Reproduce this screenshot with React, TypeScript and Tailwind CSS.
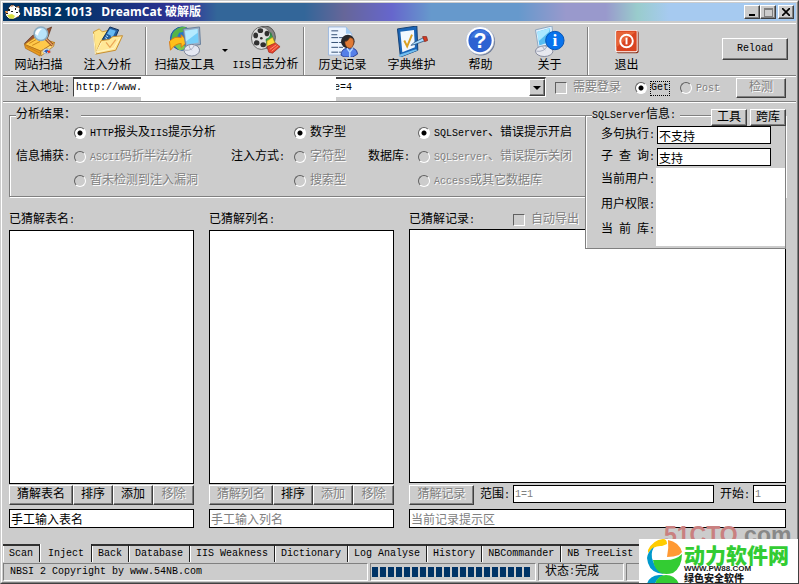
import { useState } from "react";
import type { ReactNode } from "react";

const LATIN = "font-['Liberation_Mono','Noto_Sans_CJK_SC',monospace] text-[10px]";
const FIELD_CJK = "font-['Noto_Sans_CJK_SC',sans-serif] text-xs";

/** Chinese runs are set at 12px, Latin runs in a half-width face. */
function T({ children }: { children: string }) {
  const runs = children.match(/[\x20-\x7e]+|[^\x20-\x7e]+/g) ?? [];
  return (
    <>
      {runs.map((run, i) =>
        /^[\x20-\x7e]/.test(run) ? (
          <span key={i} className={`${LATIN} whitespace-pre`}>{run}</span>
        ) : (
          <span key={i}>{run}</span>
        ),
      )}
    </>
  );
}

const DISABLED = "text-[#808080] [text-shadow:1px_1px_0_#fff]";
const RAISED =
  "border border-t-white border-l-white border-r-[#404040] border-b-[#404040] bg-[#ccc] shadow-[inset_-1px_-1px_0_#808080]";

function PushButton({ children, disabled, className = "" }: { children: string; disabled?: boolean; className?: string }) {
  return (
    <button type="button" disabled={disabled} className={`flex items-center justify-center whitespace-nowrap ${RAISED} ${disabled ? DISABLED : ""} ${className}`}>
      <T>{children}</T>
    </button>
  );
}

function Radio({ name, label, checked, disabled, dotted }: { name: string; label: string; checked?: boolean; disabled?: boolean; dotted?: boolean }) {
  return (
    <label className={`flex h-6 items-center gap-1 whitespace-nowrap ${disabled ? DISABLED : ""}`}>
      <input
        type="radio"
        name={name}
        defaultChecked={checked}
        disabled={disabled}
        className="size-3 shrink-0 appearance-none rounded-full border border-t-[#606060] border-r-white border-b-white border-l-[#606060] checked:bg-white checked:bg-[radial-gradient(circle,#000_2px,transparent_3px)]"
      />
      <span className={dotted ? "flex h-[13px] items-center outline-1 outline-dotted outline-black" : ""}>
        <T>{label}</T>
      </span>
    </label>
  );
}

function Check({ label }: { label: string }) {
  return (
    <label className={`flex items-center gap-[6px] whitespace-nowrap ${DISABLED}`}>
      <input type="checkbox" disabled className="size-3 shrink-0 appearance-none border border-t-[#606060] border-r-white border-b-white border-l-[#606060]" />
      <T>{label}</T>
    </label>
  );
}

function ScanIcon() {
  return (
    <svg className="size-8" viewBox="0 0 32 32">
      <path d="M1 18 9 10 29 1 25 12 12 18Z" fill="#9a5434" stroke="#5a3018" strokeWidth=".7" />
      <path d="M1 19 13 11 32 17 18 26Z" fill="#ffc94a" stroke="#b67518" strokeWidth=".8" />
      <path d="M1 19 18 26 17 31 2 23Z" fill="#e99b20" stroke="#a86512" strokeWidth=".7" />
      <path d="M18 26 32 17 31 21 18 31Z" fill="#ffdc79" stroke="#a86512" strokeWidth=".7" />
      <path d="m3 21 14 7M6 18l7-4M9 20l8-4" stroke="#c98218" fill="none" />
      <path d="m22 12 8 8" stroke="#8c4a20" strokeWidth="3" />
      <path d="m22 12 8 8" stroke="#f0a868" strokeWidth="1.4" />
      <circle cx="18" cy="8" r="7" fill="#b9e3fa" stroke="#8babc0" strokeWidth="1.6" />
      <path d="M12 8q1-6 7-5-4 3-4 7z" fill="#fff" />
      <ellipse cx="24" cy="26" rx="4" ry="2.6" fill="#f5f5f5" stroke="#8898b0" strokeWidth=".6" />
      <path d="M21 26q3-3 5-1l-2 3z" fill="#245ebc" />
      <path d="m24 26 3-1 1 2-2 1z" fill="#e23b22" />
    </svg>
  );
}

function FolderIcon() {
  return (
    <svg className="size-8" viewBox="0 0 32 32">
      <path d="M1 6 7 3l3 3 13-3 2 16-19 9-3-1z" fill="#ffe58a" stroke="#d09c38" />
      <path d="m10 14 8-13 9 3-6 14z" fill="#245e9f" stroke="#102e58" />
      <path d="m15 8 3-5 6 2-3 6z" fill="#65b9f3" />
      <path d="m13 12 2 1m-1-3 2 1m2 2 2 1m-1-3 2 1" stroke="#c8ecff" />
      <path d="m3 29 6-14 8-1 4-3 10-1-7 15z" fill="#ffe797" stroke="#c58b2c" />
      <path d="m3 29-2-21M9 17l-5 10 18-4 6-10" fill="none" stroke="#fff6c8" />
      <path d="m14 17 4 5 6-8" fill="none" stroke="#eba657" strokeWidth="1.3" />
    </svg>
  );
}

function ToolsIcon() {
  return (
    <svg className="size-8" viewBox="0 0 32 32">
      <circle cx="13" cy="13" r="12" fill="#2477ca" stroke="#1c5799" />
      <path d="M3 8Q8 0 17 1L15 6l-5 1-3 6-5 1z" fill="#56b448" />
      <path d="m8 17 7 2 2 5-7 1-5-5z" fill="#82cb4c" />
      <path d="M0 16q5-6 12-4l0-3 7 7-7 6v-4q-6 0-11 7z" fill="#ffbf1a" stroke="#da7914" />
      <path d="m14 3 17-2 1 18-15 3z" fill="#9ab0c8" stroke="#667e9b" />
      <path d="m16 5 13-2 1 14-12 2z" fill="#76cef9" />
      <path d="m16 5 13-2v4L17 16z" fill="#b5eaff" />
      <ellipse cx="23" cy="25" rx="8" ry="6" fill="#e5e8f2" stroke="#7d8499" />
      <path d="M16 25q8 1 10-6M20 19q0 4 3 6" fill="none" stroke="#a6abbf" />
    </svg>
  );
}

function ReelIcon() {
  return (
    <svg className="size-8" viewBox="0 0 32 32">
      <ellipse cx="15" cy="12" rx="11" ry="12" fill="#858585" stroke="#505050" />
      <ellipse cx="11" cy="13" rx="10.5" ry="12" fill="#ddd" stroke="#666" />
      <g fill="#303030">
        <ellipse cx="10" cy="5" rx="3" ry="2.5" />
        <ellipse cx="17" cy="8" rx="2.5" ry="3" />
        <ellipse cx="5" cy="10" rx="2.5" ry="3" />
        <ellipse cx="6" cy="18" rx="3" ry="2.7" />
        <ellipse cx="13" cy="20" rx="3" ry="2.7" />
        <circle cx="11" cy="13" r="1.4" />
      </g>
      <path d="M16 14q5-1 5-7l4 10-8 4z" fill="#38a84a" stroke="#26783a" strokeWidth=".7" />
      <path d="m17 16 6-4 3 7-9 3z" fill="#ffdf3d" stroke="#b58b1c" strokeWidth=".7" />
      <path d="m17 22 9-4 5 4-8 7-4-1z" fill="#e6402c" stroke="#932819" strokeWidth=".7" />
      <path d="m20 25 7-5m-5 7 7-6" stroke="#ff9b73" />
    </svg>
  );
}

function HistoryIcon() {
  return (
    <svg className="size-8" viewBox="0 0 32 32">
      <path d="M1 1h18l6 7v22H1z" fill="#edf5ff" stroke="#9fb9df" />
      <path d="M19 1v7h6z" fill="#9fcaf2" />
      <path d="M4 5h8M4 9h6M4 12h13M4 17h13M4 22h12M4 27h10" stroke="#304b72" strokeDasharray="7 1" />
      <path d="M14 30q0-6 6-7l7 0q4 2 4 6l-5 3h-9z" fill="#557fe8" stroke="#2b3f91" />
      <circle cx="21" cy="16" r="7" fill="#27272b" />
      <path d="M18 16q3 0 5-4 4 0 4 4 0 6-4 7-5-1-5-7" fill="#e07a35" stroke="#8d451d" strokeWidth=".6" />
      <path d="m20 23 3 4 3-4m-3 4v5" stroke="#b9dcff" fill="none" strokeWidth="1.5" />
    </svg>
  );
}

function DictionaryIcon() {
  return (
    <svg className="size-8" viewBox="0 0 32 32">
      <path d="M1 3 21 0l1 25-18 7z" fill="#1b66b7" stroke="#123e73" />
      <path d="m4 6 14-2 1 18L6 27z" fill="#f2f8ff" />
      <path d="m2 30 18-6 2 1-18 7z" fill="#73bff0" />
      <path d="m8 15 3 6 5-12" stroke="#d9a023" strokeWidth="2" fill="none" />
      <path d="m15 20 3-3 10-5 2 3-11 4z" fill="#a8dcff" stroke="#244d77" strokeWidth=".8" />
      <path d="m27 11 4 0 1 4-3 1z" fill="#d83a20" stroke="#963022" />
    </svg>
  );
}

function HelpIcon() {
  return (
    <svg className="size-8" viewBox="0 0 32 32">
      <circle cx="16" cy="16" r="14.500" fill="#707d98" />
      <circle cx="15" cy="15" r="14.500" fill="#fff" stroke="#a8b4cc" strokeWidth=".6" />
      <circle cx="15" cy="15" r="12" fill="#2d62d2" />
      <path d="M5 13q3-9 11-9 6 0 9 6-10-2-20 3" fill="#3f76dd" />
      <text x="15" y="23" fontFamily="Liberation Sans" fontSize="22" fontWeight="bold" fill="#fff" textAnchor="middle">?</text>
    </svg>
  );
}

function AboutIcon() {
  return (
    <svg className="size-8" viewBox="0 0 32 32">
      <path d="m1 4 17-4 2 17L4 23z" fill="#e1f2ff" stroke="#8ba5bf" />
      <path d="m3 6 13-4 1 14L5 20z" fill="#57bdf1" />
      <path d="m3 6 13-4-1 4L4 16z" fill="#a9e7ff" />
      <ellipse cx="10" cy="26" rx="9" ry="5.500" fill="#e7e8ef" stroke="#858a9d" />
      <path d="M2 26q8 1 11-5M8 21l3 4" stroke="#a4aabd" fill="none" />
      <circle cx="21" cy="15" r="9.500" fill="#0873ed" stroke="#0654b3" />
      <text x="21" y="21" fontFamily="Liberation Serif" fontSize="18" fontWeight="bold" fill="#fff" textAnchor="middle">i</text>
    </svg>
  );
}

function ExitIcon() {
  return (
    <svg className="size-8" viewBox="0 0 32 32">
      <rect x="5" y="5" width="23" height="23" rx="2" fill="#873018" />
      <rect x="4" y="4" width="23" height="23" rx="2" fill="#fff" />
      <rect x="5" y="5" width="21" height="21" rx="1" fill="#d94420" />
      <path d="M5 6h20L5 22z" fill="#e76438" />
      <circle cx="15.500" cy="15.500" r="6.500" fill="none" stroke="#fff" strokeWidth="2" />
      <path d="M15.500 12v7" stroke="#fff" strokeWidth="2" />
    </svg>
  );
}

function CatIcon() {
  return (
    <svg className="size-4" viewBox="0 0 16 16">
      <path d="M4 3 6 1l3 0 2 2 3-1 1 3-1 2 2 3-3 3-4 2-5 0-3-3-1-3 2-1z" fill="#fff" stroke="#101820" strokeWidth=".8" />
      <path d="m5 3 2-2 2 1zm6 0 3-1 0 2z" fill="#b76c3c" />
      <path d="m2 11 5-1 3 2-2 3-4-1z" fill="#d8df43" />
      <path d="M3 5h2v2H3zm3 2h2v1H6zm4-3h1v2h-1zM11 8h2v1h-2zM1 9h2v1H1z" fill="#1c1c1c" />
      <path d="m0 7 2 0 1 2-2 0zm12 5 2 0-1 1z" fill="#ff9c40" />
    </svg>
  );
}

function Tool({ icon, label }: { icon: ReactNode; label: string }) {
  return (
    <button type="button" className="flex w-[69px] shrink-0 flex-col items-center whitespace-nowrap">
      {icon}
      <span className="leading-[18px]"><T>{label}</T></span>
    </button>
  );
}

function Separator() {
  return <div className="mx-[3px] h-12 w-[2px] shrink-0 self-center border-r border-l border-r-white border-l-[#808080]" />;
}

function TitleBar() {
  return (
    <header className="flex h-[18px] items-center bg-[linear-gradient(90deg,#003366_0%,#003366_8%,#333399_23%,#336699_27%,#336699_38%,#666699_43%,#6666cc_49%,#6699cc_54%,#6699cc_65%,#9999cc_71%,#9999cc_76%,#99cccc_80%,#a6caf0_84%)] pr-[2px] pl-[2px]">
      <CatIcon />
      <h1 className="ml-[2px] font-['Open_Sans','Noto_Sans_CJK_SC',sans-serif] text-xs leading-4 font-bold whitespace-pre text-white">
        {"NBSI 2 1013   DreamCat 破解版"}
      </h1>
      <div className="ml-auto flex">
        <button type="button" aria-label="最小化" className={`flex h-[14px] w-4 items-end justify-center pb-[2px] ${RAISED}`}>
          <span className="h-[2px] w-[6px] bg-black" />
        </button>
        <button type="button" aria-label="最大化" disabled className={`flex h-[14px] w-4 items-center justify-center ${RAISED}`}>
          <span className="h-[9px] w-[9px] border border-t-2 border-[#808080]" />
        </button>
        <button type="button" aria-label="关闭" className={`ml-[2px] flex h-[14px] w-4 items-center justify-center ${RAISED}`}>
          <svg className="size-2" viewBox="0 0 8 8"><path d="m0 0 8 8M8 0 0 8" stroke="#000" strokeWidth="1.700" /></svg>
        </button>
      </div>
    </header>
  );
}

function Toolbar() {
  return (
    <nav className="mt-[2px] flex h-[53px] items-stretch border-t border-b border-t-white border-b-[#808080] pt-[2px] pl-[1px]">
      <Tool icon={<ScanIcon />} label="网站扫描" />
      <Tool icon={<FolderIcon />} label="注入分析" />
      <Separator />
      <Tool icon={<ToolsIcon />} label="扫描及工具" />
      <button type="button" aria-label="更多工具" className="flex w-3 items-center justify-center">
        <span className="border-x-[3px] border-t-[3px] border-x-transparent border-t-black" />
      </button>
      <Tool icon={<ReelIcon />} label="IIS日志分析" />
      <Separator />
      <Tool icon={<HistoryIcon />} label="历史记录" />
      <Tool icon={<DictionaryIcon />} label="字典维护" />
      <Tool icon={<HelpIcon />} label="帮助" />
      <Tool icon={<AboutIcon />} label="关于" />
      <Separator />
      <Tool icon={<ExitIcon />} label="退出" />
      <PushButton className="mr-2 mb-1 ml-auto h-[22px] w-[66px] self-center">Reload</PushButton>
    </nav>
  );
}

function AddressBar() {
  return (
    <div className="flex h-[26px] items-start border-t border-b border-t-white border-b-[#808080] pr-[10px] pl-[13px]">
      <label htmlFor="url" className="w-[57px] shrink-0 leading-[22px] whitespace-nowrap"><T>注入地址:</T></label>
      <div className="relative flex h-5 flex-1 border border-t-2 border-t-[#404040] border-r-white border-b-white border-l-[#404040] bg-white">
        <input id="url" className={`${LATIN} min-w-0 flex-1 pl-[2px]`} defaultValue={"http://www." + " ".repeat(32) + "e=4"} />
        <button type="button" aria-label="地址列表" className={`flex w-4 items-center justify-center ${RAISED}`}>
          <span className="border-x-4 border-t-4 border-x-transparent border-t-black" />
        </button>
        <div className="absolute -top-[2px] left-[67px] h-6 w-[195px] bg-white" />
      </div>
      <div className="flex h-[22px] shrink-0 items-center pl-[9px]">
        <Check label="需要登录" />
        <div className="ml-[14px] flex gap-[11px]">
          <Radio name="method" label="Get" checked dotted />
          <Radio name="method" label="Post" disabled />
        </div>
        <PushButton disabled className="ml-4 h-5 w-[50px]">检测</PushButton>
      </div>
    </div>
  );
}

function Analysis() {
  return (
    <fieldset className="h-[88px] min-w-0 border border-[#808080] pl-[6px] shadow-[1px_1px_0_#fff,inset_1px_1px_0_#fff]">
      <legend className="bg-[#ccc] pr-[5px] leading-3">分析结果：</legend>
      <div className="flex h-[72px] items-center">
        <span className="w-[58px] shrink-0"><T>信息捕获:</T></span>
        <div className="w-[157px] shrink-0">
          <Radio name="capture" label="HTTP报头及IIS提示分析" checked />
          <Radio name="capture" label="ASCII码折半法分析" disabled />
          <Radio name="capture" label="暂未检测到注入漏洞" disabled />
        </div>
        <span className="w-[63px] shrink-0"><T>注入方式:</T></span>
        <div className="w-[74px] shrink-0">
          <Radio name="mode" label="数字型" checked />
          <Radio name="mode" label="字符型" disabled />
          <Radio name="mode" label="搜索型" disabled />
        </div>
        <span className="w-[50px] shrink-0"><T>数据库:</T></span>
        <div className="shrink-0">
          <Radio name="database" label="SQLServer、错误提示开启" checked />
          <Radio name="database" label="SQLServer、错误提示关闭" disabled />
          <Radio name="database" label="Access或其它数据库" disabled />
        </div>
      </div>
    </fieldset>
  );
}

function ServerInfo() {
  return (
    <section className="absolute top-[6px] right-[10px] w-[201px] bg-[#ccc]">
      <div className="mt-[6px] border border-[#808080] bg-[#ccc] pt-2 pb-[2px] pl-[15px] shadow-[inset_1px_1px_0_#fff]">
        <div className="flex h-[22px] items-center">
          <label htmlFor="multi" className="w-14 whitespace-nowrap"><T>多句执行:</T></label>
          <input id="multi" readOnly defaultValue="不支持" className={`${FIELD_CJK} h-[18px] w-[114px] border border-black bg-white pl-[1px]`} />
        </div>
        <div className="flex h-[22px] items-center">
          <label htmlFor="sub" className="w-14 whitespace-pre"><T>子 查 询:</T></label>
          <input id="sub" readOnly defaultValue="支持" className={`${FIELD_CJK} h-[18px] w-[114px] border border-black bg-white pl-[1px]`} />
        </div>
        <div className="flex h-[78px]">
          <div className="w-[55px] leading-6">
            <div><T>当前用户:</T></div>
            <div><T>用户权限:</T></div>
            <div><T>当 前 库:</T></div>
          </div>
          <div className="flex-1 bg-white" />
        </div>
      </div>
      <h2 className="absolute top-0 left-[7px] bg-[#ccc] pr-1 leading-3"><T>SQLServer信息:</T></h2>
      <div className="absolute top-0 right-0 flex gap-[3px] bg-[#ccc]">
        <PushButton className="h-[17px] w-9">工具</PushButton>
        <PushButton className="h-[17px] w-9">跨库</PushButton>
      </div>
    </section>
  );
}

function GuessColumn({ title, guess, hint, active }: { title: string; guess: string; hint: string; active?: boolean }) {
  return (
    <section className="flex w-[185px] shrink-0 flex-col">
      <h2 className="h-[18px] leading-4"><T>{title}</T></h2>
      <div className="min-h-20 flex-1 border border-black bg-white" />
      <div className="mt-px flex h-5">
        <PushButton disabled={!active} className="w-16">{guess}</PushButton>
        <PushButton className="w-10">排序</PushButton>
        <PushButton disabled={!active} className="w-10">添加</PushButton>
        <PushButton disabled className="flex-1">移除</PushButton>
      </div>
      <input aria-label={hint} defaultValue={hint} disabled={!active} className={`${FIELD_CJK} mt-1 h-[19px] border border-black bg-white pl-[1px] ${active ? "" : "text-[#808080]"}`} />
    </section>
  );
}

function Records() {
  return (
    <section className="flex min-w-0 flex-1 flex-col">
      <div className="flex h-[17px] items-start">
        <h2 className="w-[104px] shrink-0 leading-4"><T>已猜解记录:</T></h2>
        <Check label="自动导出" />
      </div>
      <div className="min-h-20 flex-1 border border-black bg-white" />
      <div className="mt-[2px] flex h-5">
        <PushButton disabled className="w-[65px]">猜解记录</PushButton>
        <label htmlFor="range" className="w-[39px] shrink-0 pl-[6px] leading-5 whitespace-nowrap"><T>范围:</T></label>
        <input id="range" disabled defaultValue="1=1" className={`${LATIN} h-[18px] min-w-0 flex-1 border border-black bg-white pl-[1px] text-[#808080]`} />
        <label htmlFor="start" className="w-[39px] shrink-0 pl-[6px] leading-5 whitespace-nowrap"><T>开始:</T></label>
        <input id="start" disabled defaultValue="1" className={`${LATIN} h-[18px] w-[33px] border border-black bg-white pl-[1px] text-[#808080]`} />
      </div>
      <input aria-label="当前记录提示区" disabled defaultValue="当前记录提示区" className={`${FIELD_CJK} mt-1 h-[19px] border border-black bg-white pl-[1px] text-[#808080]`} />
    </section>
  );
}

const TABS = ["Scan", "Inject", "Back", "Database", "IIS Weakness", "Dictionary", "Log Analyse", "History", "NBCommander", "NB TreeList"];

function Tabs() {
  const [current, setCurrent] = useState("Inject");
  return (
    <div role="tablist" className="flex h-[18px] overflow-hidden">
      {TABS.map((tab) => (
        <button
          key={tab}
          type="button"
          role="tab"
          aria-selected={tab === current}
          onClick={() => setCurrent(tab)}
          className={
            tab === current
              ? `${LATIN} shrink-0 border-r border-l border-r-[#202020] border-l-white px-[7px] pt-[2px] whitespace-nowrap`
              : `${LATIN} shrink-0 border-t-2 border-r border-t-[#303030] border-r-[#202020] px-[6px] whitespace-nowrap shadow-[inset_1px_0_0_#fff] last:flex-1 last:text-left`
          }
        >
          {tab}
        </button>
      ))}
    </div>
  );
}

const SUNKEN = "border border-t-[#808080] border-l-[#808080] border-r-white border-b-white";

function StatusBar() {
  return (
    <footer className="mt-px flex h-[18px] gap-[2px]">
      <div className={`flex min-w-0 flex-1 items-center pl-[6px] ${SUNKEN}`}><T>NBSI 2 Copyright by www.54NB.com</T></div>
      <div role="progressbar" aria-label="进度" aria-valuenow={100} className={`flex w-[166px] items-center gap-[2px] pl-[1px] ${SUNKEN}`}>
        {Array.from({ length: 20 }, (_, i) => (
          <span key={i} className="h-[10px] w-[6px] shrink-0 bg-[#003366]" />
        ))}
      </div>
      <div className={`flex w-[86px] items-center pl-[6px] whitespace-nowrap ${SUNKEN}`}><T>状态:完成</T></div>
      <div className={`w-[170px] ${SUNKEN}`} />
    </footer>
  );
}

function Watermark() {
  return (
    <div className="pointer-events-none absolute -right-px -bottom-px w-40">
      <div className="flex h-4 pl-[25px] font-['Liberation_Sans',sans-serif] text-[23px] leading-6 font-bold whitespace-nowrap">
        <span className="text-[#c98080]">51CTO</span>
        <span className="text-[#888]">.com</span>
      </div>
      <div className="relative flex h-[45px] overflow-hidden bg-white pl-2">
        <svg className="h-[45px] w-9 shrink-0" viewBox="0 0 36 45">
          <path d="M1 11Q6 1 16 0q4 0 4 5l-5 2Q7 6 1 14z" fill="#fc0" />
          <path d="M21 1q11 2 14 12l-3 3q-5 2-12 2 2-9 1-17" fill="#f93" />
          <path d="M7 8Q3 15 6 22q2 8 11 13l-6-1Q1 31 0 19q1-7 7-11" fill="#09c" />
          <path d="M6 21h13q10 0 16-6 0 13-9 19-7 2-12 0Q7 30 6 21" fill="#3c3" />
          <path d="M0 45q2-8 12-9l5 0q-7 3-9 9z" fill="#09c" />
          <path d="M8 45q3-9 11-9 9 0 13 9z" fill="#3c3" />
        </svg>
        <div className="pt-1 pl-[1px] font-['Noto_Sans_CJK_SC',sans-serif] font-black whitespace-nowrap">
          <div className="text-[21px] leading-[22px] text-[#3c3]">动力软件网</div>
          <div className="font-['Liberation_Sans',sans-serif] text-[8px] leading-[7px] text-[#1a1a1a]">WWW.PW88.COM</div>
          <div className="text-[10px] leading-[11px] text-[#1a1a1a]">绿色安全软件</div>
        </div>
      </div>
    </div>
  );
}

export default function App() {
  return (
    <div className="relative flex h-screen flex-col overflow-hidden border border-t-[#ccc] border-r-[#404040] border-b-[#404040] border-l-[#ccc] bg-[#ccc] font-['Liberation_Mono','Noto_Sans_CJK_SC',sans-serif] text-xs leading-4 text-black">
      <div className="flex min-h-0 flex-1 flex-col border border-t-white border-r-[#808080] border-b-[#808080] border-l-white p-px">
        <TitleBar />
        <Toolbar />
        <AddressBar />
        <main className="relative flex min-h-0 flex-1 flex-col border-t border-white pt-[6px] pr-[10px] pb-4 pl-[6px]">
          <Analysis />
          <div className="mt-[15px] flex min-h-0 flex-1 gap-[15px]">
            <GuessColumn title="已猜解表名:" guess="猜解表名" hint="手工输入表名" active />
            <GuessColumn title="已猜解列名:" guess="猜解列名" hint="手工输入列名" />
            <Records />
          </div>
          <ServerInfo />
        </main>
        <Tabs />
        <StatusBar />
      </div>
      <Watermark />
    </div>
  );
}
